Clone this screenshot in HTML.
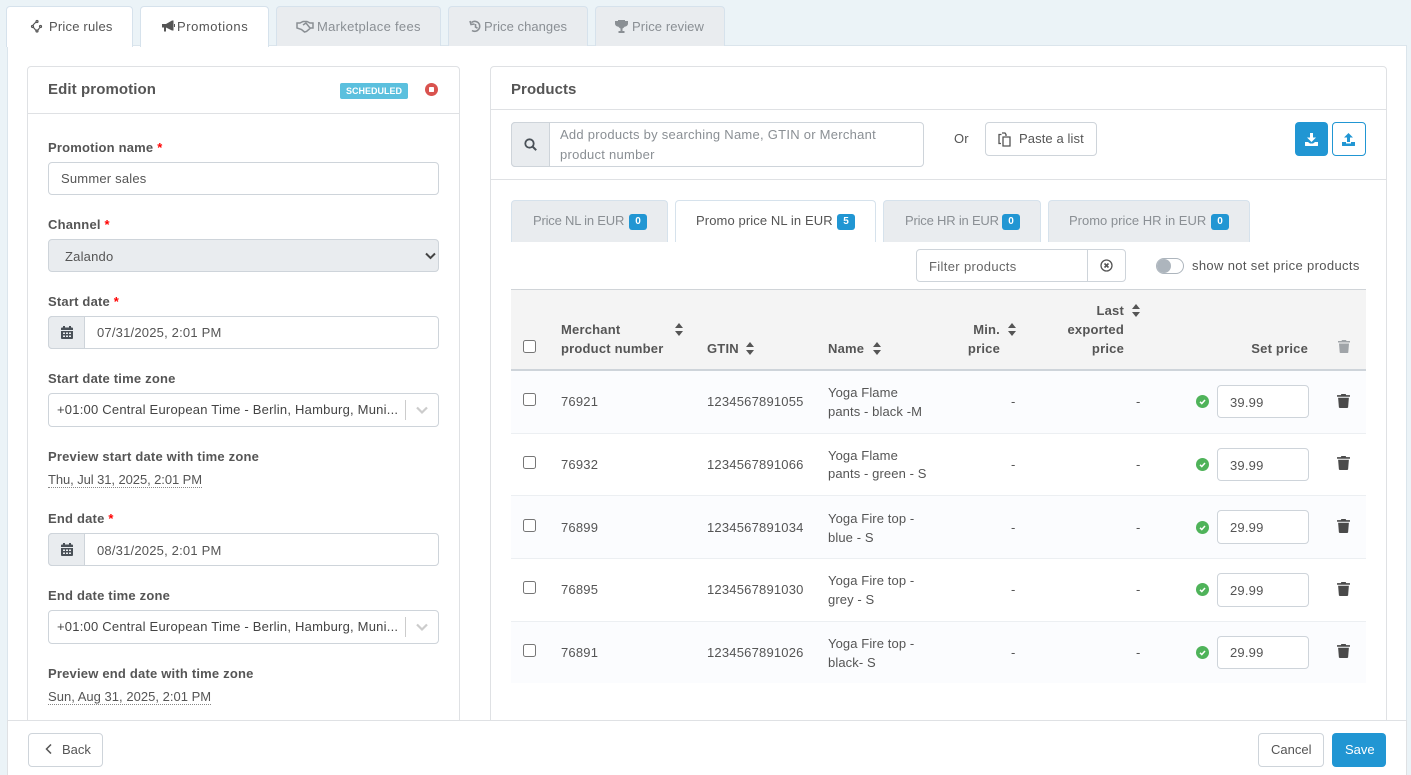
<!DOCTYPE html>
<html><head><meta charset="utf-8"><title>Edit promotion</title>
<style>
html,body{margin:0;padding:0;width:1411px;height:775px;overflow:hidden;background:#ebf3f7;font-family:"Liberation Sans",sans-serif;font-size:13px;color:#555}
.a{position:absolute;box-sizing:border-box}
.t{position:absolute;white-space:nowrap;line-height:18px;letter-spacing:.2px;margin-top:1px}
.n{margin-top:0}
.l{font-weight:700;color:#555;letter-spacing:.2px}
.h{font-weight:700;color:#555;font-size:15px;letter-spacing:.1px;margin-top:2px}
.r{color:#f00}
.m{color:#8a8f94}
.tab{position:absolute;top:6px;height:40px;box-sizing:border-box;background:#e9ecef;border:1px solid #d6e2ec;border-bottom:0;border-radius:4px 4px 0 0}
.on{background:#fff;height:41px}
.in{position:absolute;box-sizing:border-box;background:#fff;border:1px solid #ced4da;border-radius:4px}
.ad{position:absolute;box-sizing:border-box;background:#e9ecef;border:1px solid #ced4da;border-radius:4px 0 0 4px}
.b{position:absolute;background:#2196d3;color:#fff;border-radius:3px;font-size:10px;font-weight:700;width:18px;height:16px;line-height:16px;text-align:center}
.ptab{position:absolute;top:200px;height:42px;box-sizing:border-box;background:#e9ecef;border:1px solid #d6e2ec;border-bottom:0;border-radius:4px 4px 0 0}
.ck{position:absolute;box-sizing:border-box;width:13px;height:13px;background:#fff;border:1px solid #767676;border-radius:2.5px;left:523px}
.dot{border-bottom:1px dotted #888;line-height:15px;letter-spacing:0}
.y{letter-spacing:.1px}
svg{position:absolute;display:block}
</style></head><body>

<!-- tabs -->
<div class="a" style="left:7px;top:45px;width:1400px;height:730px;background:#fff;border:1px solid #dbe5ec;border-bottom:0"></div>
<div class="tab on" style="left:6px;width:127px"></div>
<div class="tab on" style="left:140px;width:129px"></div>
<div class="tab" style="left:276px;width:165px"></div>
<div class="tab" style="left:448px;width:140px"></div>
<div class="tab" style="left:595px;width:130px"></div>
<svg style="left:30px;top:19px" width="13" height="15" viewBox="0 0 13 15"><g fill="none" stroke="#555" stroke-width="1.2"><circle cx="7" cy="2.5" r="1"/><circle cx="2.5" cy="7.5" r="1"/><circle cx="10.5" cy="7.5" r="1"/><circle cx="7" cy="12" r="1"/><path d="M3 6l3-3M3.500 8.500l2.500 3M9.500 9l-1.500 2"/></g></svg>
<div class="t" style="left:49px;top:17px">Price rules</div>
<svg style="left:161px;top:20px" width="14" height="13" viewBox="0 0 14 13"><path fill="#555" d="M1 4h4l6-3.500h1.500v10H11L5 7.500V11.500H3V7.500H1zM13 4h1v3h-1z"/></svg>
<div class="t" style="left:177px;top:17px;letter-spacing:.55px">Promotions</div>
<svg style="left:296px;top:20px" width="18" height="13" viewBox="0 0 18 13"><path fill="none" stroke="#8a8f94" stroke-width="1.5" d="M1 3h3l3-1.500h4l3 1.500h3v5h-2.500l-4 3.500-2 .5-3-2.500L1 8zM7 5l3-2 4 5"/></svg>
<div class="t m" style="left:317px;top:17px;letter-spacing:.3px">Marketplace fees</div>
<svg style="left:469px;top:20px" width="13" height="13" viewBox="0 0 13 13"><path fill="none" stroke="#8a8f94" stroke-width="1.6" d="M2.500 2.500A5 5 0 1 1 3 10.500M1 1l1 3.500 3.500-.5M6.500 4v3l2 1.200"/></svg>
<div class="t m" style="left:484px;top:17px;letter-spacing:.05px">Price changes</div>
<svg style="left:615px;top:20px" width="13" height="13" viewBox="0 0 13 13"><path fill="#8a8f94" d="M3 0h7v1h3v2.500c0 1.800-1.500 3-3.500 3.300C9 7.800 8 8.300 7.500 8.500V11h2v2h-6v-2h2V8.500C5 8.300 4 7.800 3.500 6.800 1.500 6.500 0 5.300 0 3.500V1h3z"/></svg>
<div class="t m" style="left:632px;top:17px;letter-spacing:.1px">Price review</div>

<!-- left card -->
<div class="a" style="left:27px;top:66px;width:433px;height:670px;background:#fff;border:1px solid #dfe1e4;border-radius:4px"></div>
<div class="a" style="left:28px;top:113px;width:431px;height:1px;background:#dfe1e4"></div>
<div class="t h" style="left:48px;top:79px">Edit promotion</div>
<div class="a" style="left:340px;top:83px;width:68px;height:16px;background:#5bc0de;border-radius:2px;color:#fff;font-size:9px;font-weight:700;line-height:16px;text-align:center">SCHEDULED</div>
<svg style="left:425px;top:83px" width="13" height="13" viewBox="0 0 13 13"><circle cx="6.500" cy="6.500" r="6.500" fill="#d9534f"/><rect x="4" y="4" width="5" height="5" rx=".8" fill="#fff"/></svg>

<div class="t l" style="left:48px;top:138px">Promotion name <span class="r">*</span></div>
<div class="in" style="left:48px;top:162px;width:391px;height:33px"></div>
<div class="t" style="left:61px;top:169px">Summer sales</div>

<div class="t l" style="left:48px;top:215px">Channel <span class="r">*</span></div>
<div class="in" style="left:48px;top:239px;width:391px;height:33px;background:#e9ecef"></div>
<div class="t" style="left:65px;top:247px">Zalando</div>
<svg style="left:425px;top:252px" width="11" height="8" viewBox="0 0 11 8"><path fill="none" stroke="#444" stroke-width="2" d="M1 1.500l4.500 4.500L10 1.500"/></svg>

<div class="t l" style="left:48px;top:292px">Start date <span class="r">*</span></div>
<div class="in" style="left:48px;top:316px;width:391px;height:33px"></div>
<div class="ad" style="left:48px;top:316px;width:37px;height:33px"></div>
<svg style="left:61px;top:326px" width="12" height="13" viewBox="0 0 12 13"><path fill="#495057" d="M2 0h2v1.500h4V0h2v1.500h1c.6 0 1 .4 1 1V4H0V2.500c0-.6.4-1 1-1h1zM0 5h12v7c0 .6-.4 1-1 1H1c-.6 0-1-.4-1-1zM2 6.500V8h2V6.500zm3 0V8h2V6.500zm3 0V8h2V6.500zM2 9.500V11h2V9.500zm3 0V11h2V9.500zm3 0V11h2V9.500z" fill-rule="evenodd"/></svg>
<div class="t" style="left:97px;top:323px">07/31/2025, 2:01 PM</div>

<div class="t l" style="left:48px;top:369px">Start date time zone</div>
<div class="in" style="left:48px;top:393px;width:391px;height:34px"></div>
<div class="t" style="left:57px;top:400px;color:#444;letter-spacing:.22px">+01:00 Central European Time - Berlin, Hamburg, Muni...</div>
<div class="a" style="left:405px;top:400px;width:1px;height:20px;background:#ccc"></div>
<svg style="left:416px;top:406px" width="12" height="9" viewBox="0 0 12 9"><path fill="none" stroke="#ccc" stroke-width="2.200" d="M1 1.500l5 5 5-5"/></svg>

<div class="t l" style="left:48px;top:447px">Preview start date with time zone</div>
<div class="t dot" style="left:48px;top:471px;letter-spacing:-.08px">Thu, Jul 31, 2025, 2:01 PM</div>

<div class="t l" style="left:48px;top:509px">End date <span class="r">*</span></div>
<div class="in" style="left:48px;top:533px;width:391px;height:33px"></div>
<div class="ad" style="left:48px;top:533px;width:37px;height:33px"></div>
<svg style="left:61px;top:543px" width="12" height="13" viewBox="0 0 12 13"><path fill="#495057" d="M2 0h2v1.500h4V0h2v1.500h1c.6 0 1 .4 1 1V4H0V2.500c0-.6.4-1 1-1h1zM0 5h12v7c0 .6-.4 1-1 1H1c-.6 0-1-.4-1-1zM2 6.500V8h2V6.500zm3 0V8h2V6.500zm3 0V8h2V6.500zM2 9.500V11h2V9.500zm3 0V11h2V9.500zm3 0V11h2V9.500z" fill-rule="evenodd"/></svg>
<div class="t" style="left:97px;top:541px">08/31/2025, 2:01 PM</div>

<div class="t l" style="left:48px;top:586px">End date time zone</div>
<div class="in" style="left:48px;top:610px;width:391px;height:34px"></div>
<div class="t" style="left:57px;top:617px;color:#444;letter-spacing:.22px">+01:00 Central European Time - Berlin, Hamburg, Muni...</div>
<div class="a" style="left:405px;top:617px;width:1px;height:20px;background:#ccc"></div>
<svg style="left:416px;top:623px" width="12" height="9" viewBox="0 0 12 9"><path fill="none" stroke="#ccc" stroke-width="2.200" d="M1 1.500l5 5 5-5"/></svg>

<div class="t l" style="left:48px;top:664px">Preview end date with time zone</div>
<div class="t dot" style="left:48px;top:688px;letter-spacing:.02px">Sun, Aug 31, 2025, 2:01 PM</div>

<!-- right card -->
<div class="a" style="left:490px;top:66px;width:897px;height:670px;background:#fff;border:1px solid #dfe1e4;border-radius:4px"></div>
<div class="a" style="left:491px;top:109px;width:895px;height:1px;background:#dfe1e4"></div>
<div class="a" style="left:491px;top:179px;width:895px;height:1px;background:#dfe1e4"></div>
<div class="t h" style="left:511px;top:79px;letter-spacing:.05px">Products</div>

<div class="in" style="left:511px;top:122px;width:413px;height:45px"></div>
<div class="ad" style="left:511px;top:122px;width:39px;height:45px"></div>
<svg style="left:524px;top:138px" width="13" height="13" viewBox="0 0 13 13"><circle cx="5.500" cy="5.500" r="4.200" fill="none" stroke="#495057" stroke-width="1.800"/><path stroke="#495057" stroke-width="2" d="M8.500 8.500l3.700 3.700"/></svg>
<div class="t m n" style="left:560px;top:125px;line-height:20px;width:350px;letter-spacing:.26px">Add products by searching Name, GTIN or Merchant<br>product number</div>
<div class="t" style="left:954px;top:129px">Or</div>
<div class="in" style="left:985px;top:122px;width:112px;height:34px"></div>
<svg style="left:998px;top:132px" width="13" height="15" viewBox="0 0 13 15"><path fill="none" stroke="#555" stroke-width="1.300" d="M3 11.500H1V2.500h2.500M4 1h3l1 1.500v1.500M5 5h7v9H5z"/></svg>
<div class="t" style="left:1019px;top:129px;letter-spacing:.1px">Paste a list</div>
<div class="a" style="left:1295px;top:122px;width:33px;height:34px;background:#2196d3;border-radius:4px"></div>
<svg style="left:1305px;top:133px" width="13" height="13" viewBox="0 0 13 13"><path fill="#fff" d="M5 0h3v4.500h3L6.500 9 2 4.500h3zM0 9h3l2 1.500h3L10 9h3v3.500c0 .3-.2.500-.5.500H.5c-.3 0-.5-.2-.5-.5z"/></svg>
<div class="a" style="left:1332px;top:122px;width:34px;height:34px;background:#fff;border:1px solid #2196d3;border-radius:4px"></div>
<svg style="left:1342px;top:133px" width="13" height="13" viewBox="0 0 13 13"><path fill="#2196d3" d="M6.500 0L11 4.500H8V9H5V4.500H2zM0 9h4v1.500h5V9h4v3.500c0 .3-.2.500-.5.500H.5c-.3 0-.5-.2-.5-.5z"/></svg>

<!-- price tabs -->
<div class="ptab" style="left:511px;width:157px"></div>
<div class="ptab" style="left:675px;width:201px;background:#fff"></div>
<div class="ptab" style="left:883px;width:158px"></div>
<div class="ptab" style="left:1048px;width:202px"></div>
<div class="t m" style="left:533px;top:211px;letter-spacing:-.2px">Price NL in EUR</div><div class="b" style="left:629px;top:214px">0</div>
<div class="t" style="left:696px;top:211px;letter-spacing:.1px">Promo price NL in EUR</div><div class="b" style="left:837px;top:214px">5</div>
<div class="t m" style="left:905px;top:211px;letter-spacing:-.2px">Price HR in EUR</div><div class="b" style="left:1002px;top:214px">0</div>
<div class="t m" style="left:1069px;top:211px;letter-spacing:0">Promo price HR in EUR</div><div class="b" style="left:1211px;top:214px">0</div>

<!-- filter -->
<div class="in" style="left:916px;top:249px;width:210px;height:33px"></div>
<div class="a" style="left:1087px;top:250px;width:1px;height:31px;background:#ced4da"></div>
<div class="t" style="left:929px;top:257px;color:#666;letter-spacing:.35px">Filter products</div>
<svg style="left:1100px;top:259px" width="13" height="13" viewBox="0 0 13 13"><circle cx="6.500" cy="6.500" r="5.500" fill="none" stroke="#555" stroke-width="1.300"/><path stroke="#555" stroke-width="1.600" d="M4.500 4.500l4 4M8.500 4.500l-4 4"/></svg>
<div class="a" style="left:1156px;top:258px;width:28px;height:16px;background:#fff;border:1px solid #adb5bd;border-radius:8px"></div>
<div class="a" style="left:1157px;top:259px;width:14px;height:14px;background:#adb5bd;border-radius:50%"></div>
<div class="t" style="left:1192px;top:256px;letter-spacing:.35px">show not set price products</div>

<!-- table head -->
<div class="a" style="left:511px;top:289px;width:855px;height:82px;background:#f4f4f4;border-top:1px solid #d0d4d8;border-bottom:2px solid #ced4da"></div>
<div class="ck" style="top:340px"></div>
<div class="t l n" style="left:561px;top:320px;line-height:19px">Merchant<br>product number</div>
<svg style="left:674px;top:323px" width="10" height="13" viewBox="0 0 10 13"><path fill="#555" d="M5 0l4 5H1zM5 13L1 8h8z"/></svg>
<div class="t l" style="left:707px;top:339px">GTIN</div>
<svg style="left:745px;top:342px" width="10" height="13" viewBox="0 0 10 13"><path fill="#555" d="M5 0l4 5H1zM5 13L1 8h8z"/></svg>
<div class="t l" style="left:828px;top:339px">Name</div>
<svg style="left:872px;top:342px" width="10" height="13" viewBox="0 0 10 13"><path fill="#555" d="M5 0l4 5H1zM5 13L1 8h8z"/></svg>
<div class="t l n" style="left:940px;top:320px;width:60px;text-align:right;line-height:19px">Min.<br>price</div>
<svg style="left:1007px;top:323px" width="10" height="13" viewBox="0 0 10 13"><path fill="#555" d="M5 0l4 5H1zM5 13L1 8h8z"/></svg>
<div class="t l n" style="left:1044px;top:301px;width:80px;text-align:right;line-height:19px">Last<br>exported<br>price</div>
<svg style="left:1131px;top:304px" width="10" height="13" viewBox="0 0 10 13"><path fill="#555" d="M5 0l4 5H1zM5 13L1 8h8z"/></svg>
<div class="t l" style="left:1228px;top:339px;width:80px;text-align:right">Set price</div>
<svg style="left:1338px;top:340px" width="12" height="13" viewBox="0 0 12 13"><path fill="#a0a4a8" d="M4 0h4l.5 1H12v1.500H0V1h3.500zM1 3.500h10l-.7 8.700c0 .5-.5.800-1 .8H2.700c-.5 0-1-.3-1-.8z"/></svg>

<!-- rows -->
<div class="a" style="left:511px;top:371px;width:855px;height:63px;background:#fbfcfe;border-bottom:1px solid #eceff2"></div>
<div class="a" style="left:511px;top:434px;width:855px;height:62px;background:#fff;border-bottom:1px solid #eceff2"></div>
<div class="a" style="left:511px;top:496px;width:855px;height:63px;background:#fbfcfe;border-bottom:1px solid #eceff2"></div>
<div class="a" style="left:511px;top:559px;width:855px;height:63px;background:#fff;border-bottom:1px solid #eceff2"></div>
<div class="a" style="left:511px;top:622px;width:855px;height:61px;background:#fbfcfe"></div>

<div class="ck" style="top:393px"></div>
<div class="t" style="left:561px;top:392px">76921</div>
<div class="t" style="left:707px;top:392px">1234567891055</div>
<div class="t y n" style="left:828px;top:383px;line-height:19px">Yoga Flame<br>pants - black -M</div>
<div class="t" style="left:1011px;top:392px">-</div><div class="t" style="left:1136px;top:392px">-</div>
<svg style="left:1196px;top:395px" width="13" height="13" viewBox="0 0 13 13"><circle cx="6.500" cy="6.500" r="6.500" fill="#4fb35a"/><path fill="none" stroke="#fff" stroke-width="1.500" d="M4 6.800l1.800 1.700L9 5"/></svg>
<div class="in" style="left:1217px;top:385px;width:92px;height:33px"></div>
<div class="t" style="left:1230px;top:393px">39.99</div>
<svg style="left:1337px;top:394px" width="13" height="14" viewBox="0 0 12 13"><path fill="#4a4a4a" d="M4 0h4l.5 1H12v1.500H0V1h3.500zM1 3.500h10l-.7 8.700c0 .5-.5.800-1 .8H2.700c-.5 0-1-.3-1-.8z"/></svg>

<div class="ck" style="top:456px"></div>
<div class="t" style="left:561px;top:455px">76932</div>
<div class="t" style="left:707px;top:455px">1234567891066</div>
<div class="t y n" style="left:828px;top:447px;line-height:18px">Yoga Flame<br>pants - green - S</div>
<div class="t" style="left:1011px;top:455px">-</div><div class="t" style="left:1136px;top:455px">-</div>
<svg style="left:1196px;top:458px" width="13" height="13" viewBox="0 0 13 13"><circle cx="6.500" cy="6.500" r="6.500" fill="#4fb35a"/><path fill="none" stroke="#fff" stroke-width="1.500" d="M4 6.800l1.800 1.700L9 5"/></svg>
<div class="in" style="left:1217px;top:448px;width:92px;height:33px"></div>
<div class="t" style="left:1230px;top:456px">39.99</div>
<svg style="left:1337px;top:456px" width="13" height="14" viewBox="0 0 12 13"><path fill="#4a4a4a" d="M4 0h4l.5 1H12v1.500H0V1h3.500zM1 3.500h10l-.7 8.700c0 .5-.5.800-1 .8H2.700c-.5 0-1-.3-1-.8z"/></svg>

<div class="ck" style="top:519px"></div>
<div class="t" style="left:561px;top:518px">76899</div>
<div class="t" style="left:707px;top:518px">1234567891034</div>
<div class="t y n" style="left:828px;top:509px;line-height:19px">Yoga Fire top -<br>blue - S</div>
<div class="t" style="left:1011px;top:518px">-</div><div class="t" style="left:1136px;top:518px">-</div>
<svg style="left:1196px;top:521px" width="13" height="13" viewBox="0 0 13 13"><circle cx="6.500" cy="6.500" r="6.500" fill="#4fb35a"/><path fill="none" stroke="#fff" stroke-width="1.500" d="M4 6.800l1.800 1.700L9 5"/></svg>
<div class="in" style="left:1217px;top:510px;width:92px;height:34px"></div>
<div class="t n" style="left:1230px;top:519px">29.99</div>
<svg style="left:1337px;top:519px" width="13" height="14" viewBox="0 0 12 13"><path fill="#4a4a4a" d="M4 0h4l.5 1H12v1.500H0V1h3.500zM1 3.500h10l-.7 8.700c0 .5-.5.800-1 .8H2.700c-.5 0-1-.3-1-.8z"/></svg>

<div class="ck" style="top:581px"></div>
<div class="t" style="left:561px;top:580px">76895</div>
<div class="t" style="left:707px;top:580px">1234567891030</div>
<div class="t y n" style="left:828px;top:571px;line-height:19px">Yoga Fire top -<br>grey - S</div>
<div class="t" style="left:1011px;top:580px">-</div><div class="t" style="left:1136px;top:580px">-</div>
<svg style="left:1196px;top:583px" width="13" height="13" viewBox="0 0 13 13"><circle cx="6.500" cy="6.500" r="6.500" fill="#4fb35a"/><path fill="none" stroke="#fff" stroke-width="1.500" d="M4 6.800l1.800 1.700L9 5"/></svg>
<div class="in" style="left:1217px;top:573px;width:92px;height:34px"></div>
<div class="t" style="left:1230px;top:581px">29.99</div>
<svg style="left:1337px;top:582px" width="13" height="14" viewBox="0 0 12 13"><path fill="#4a4a4a" d="M4 0h4l.5 1H12v1.500H0V1h3.500zM1 3.500h10l-.7 8.700c0 .5-.5.800-1 .8H2.700c-.5 0-1-.3-1-.8z"/></svg>

<div class="ck" style="top:644px"></div>
<div class="t" style="left:561px;top:643px">76891</div>
<div class="t" style="left:707px;top:643px">1234567891026</div>
<div class="t y n" style="left:828px;top:634px;line-height:19px">Yoga Fire top -<br>black- S</div>
<div class="t" style="left:1011px;top:643px">-</div><div class="t" style="left:1136px;top:643px">-</div>
<svg style="left:1196px;top:646px" width="13" height="13" viewBox="0 0 13 13"><circle cx="6.500" cy="6.500" r="6.500" fill="#4fb35a"/><path fill="none" stroke="#fff" stroke-width="1.500" d="M4 6.800l1.800 1.700L9 5"/></svg>
<div class="in" style="left:1217px;top:636px;width:92px;height:33px"></div>
<div class="t" style="left:1230px;top:643px">29.99</div>
<svg style="left:1337px;top:644px" width="13" height="14" viewBox="0 0 12 13"><path fill="#4a4a4a" d="M4 0h4l.5 1H12v1.500H0V1h3.500zM1 3.500h10l-.7 8.700c0 .5-.5.800-1 .8H2.700c-.5 0-1-.3-1-.8z"/></svg>

<!-- footer -->
<div class="a" style="left:7px;top:720px;width:1400px;height:55px;background:#fff;border-top:1px solid #dfe1e4;border-left:1px solid #dfe1e4;border-right:1px solid #dfe1e4"></div>
<div class="in" style="left:28px;top:733px;width:75px;height:34px"></div>
<svg style="left:45px;top:744px" width="7" height="10" viewBox="0 0 7 10"><path fill="none" stroke="#555" stroke-width="1.500" d="M6 .5L1.500 5 6 9.500"/></svg>
<div class="t" style="left:62px;top:740px;letter-spacing:0">Back</div>
<div class="in" style="left:1258px;top:733px;width:66px;height:34px"></div>
<div class="t" style="left:1271px;top:740px;letter-spacing:0">Cancel</div>
<div class="a" style="left:1332px;top:733px;width:54px;height:34px;background:#2196d3;border-radius:4px"></div>
<div class="t" style="left:1345px;top:740px;color:#fff;letter-spacing:0">Save</div>
</body></html>
